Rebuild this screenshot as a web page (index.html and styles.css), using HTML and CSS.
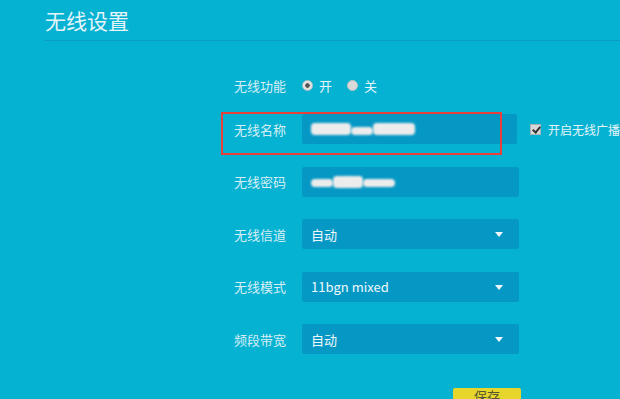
FILE: index.html
```html
<!DOCTYPE html>
<html lang="zh-CN">
<head>
    <meta charset="UTF-8">
    <title>无线设置</title>
    <link rel="stylesheet" href="styles.css">
</head>
<body>
    <div class="page">
        <h1 class="title">无线设置</h1>
        <div class="form">
            <div class="row row-switch">
                <span class="label">无线功能</span>
                <span class="radio radio-on"></span><span class="radio-text">开</span>
                <span class="radio"></span><span class="radio-text">关</span>
            </div>
            <div class="row">
                <span class="label">无线名称</span>
                <div class="field">
                    <span class="blur w40"></span>
                    <span class="blur blur-thin w22"></span>
                    <span class="blur w42"></span>
                </div>
                <span class="check"></span><span class="check-text">开启无线广播</span>
                <div class="mark"></div>
            </div>
            <div class="row">
                <span class="label">无线密码</span>
                <div class="field">
                    <span class="blur blur-thin w22"></span>
                    <span class="blur w30"></span>
                    <span class="blur blur-thin w32"></span>
                </div>
            </div>
            <div class="row">
                <span class="label">无线信道</span>
                <div class="field select">自动<span class="arrow"></span></div>
            </div>
            <div class="row">
                <span class="label">无线模式</span>
                <div class="field select">11bgn mixed<span class="arrow"></span></div>
            </div>
            <div class="row">
                <span class="label">频段带宽</span>
                <div class="field select">自动<span class="arrow"></span></div>
            </div>
            <div class="actions">
                <button class="save">保存</button>
            </div>
        </div>
    </div>
</body>
</html>
```

FILE: styles.css
```css
body {
    margin: 0;
    background: #06b2d2;
    font-family: "Noto Sans CJK SC", "Liberation Sans", sans-serif;
    overflow: hidden;
}
.page {
    padding-left: 45px;
    height: 399px;
}
.title {
    margin: 0;
    padding-top: 5px;
    height: 35px;
    font-size: 21px;
    font-weight: normal;
    line-height: 30px;
    color: #e6f5f9;
    border-bottom: 1px solid #0a9cc4;
}
.form {
    padding-left: 189px;
    padding-top: 34px;
}
.row {
    position: relative;
    display: flex;
    align-items: center;
    height: 30px;
    margin-bottom: 22.5px;
    white-space: nowrap;
}
.row-switch {
    height: 20px;
    margin-bottom: 19px;
}
.label {
    width: 68px;
    font-size: 13px;
    color: #d6eef5;
}
.radio {
    width: 9px;
    height: 9px;
    border-radius: 50%;
    background: #d9d9d9;
    border: 1px solid #b9c4c6;
    margin-right: 6px;
}
.radio-on {
    background: radial-gradient(circle, #555 0 2px, #e2e2e2 2.5px);
}
.radio-text {
    font-size: 13px;
    color: #e6f5f9;
    margin-right: 15px;
}
.field {
    position: relative;
    box-sizing: border-box;
    width: 217px;
    height: 30px;
    background: #0698c5;
    border-radius: 2px;
    padding-left: 9px;
    display: flex;
    align-items: center;
    font-size: 13px;
    color: #eef8fb;
}
.blur {
    display: block;
    height: 12px;
    background: #ececec;
    border-radius: 4px;
    filter: blur(0.8px);
}
.blur-thin {
    height: 8px;
    margin-top: 3px;
}
.w22 { width: 22px; }
.w30 { width: 30px; }
.w32 { width: 32px; }
.w40 { width: 40px; }
.w42 { width: 42px; }
.select .arrow {
    position: absolute;
    right: 16px;
    top: 13px;
    border-left: 4px solid transparent;
    border-right: 4px solid transparent;
    border-top: 5px solid #f2f8fa;
}
.check {
    width: 9px;
    height: 9px;
    margin-left: 13px;
    background: #d8d8d8;
    border: 1px solid #a8b2b4;
    position: relative;
}
.check::after {
    content: "";
    position: absolute;
    left: 3px;
    top: 0;
    width: 3px;
    height: 6px;
    border-right: 2px solid #333;
    border-bottom: 2px solid #333;
    transform: rotate(40deg);
}
.check-text {
    margin-left: 7px;
    font-size: 12px;
    color: #e6f5f9;
}
.mark {
    position: absolute;
    left: -13px;
    top: -2px;
    width: 277px;
    height: 39px;
    border: 2px solid #e8403a;
}
.actions {
    padding-left: 219px;
    padding-top: 5px;
}
.save {
    width: 68px;
    height: 30px;
    border: none;
    border-radius: 2px;
    background: #e6d52a;
    color: #555533;
    font-family: "Noto Sans CJK SC", sans-serif;
    font-size: 13px;
    line-height: 16px;
    padding: 0 0 14px;
}
```
